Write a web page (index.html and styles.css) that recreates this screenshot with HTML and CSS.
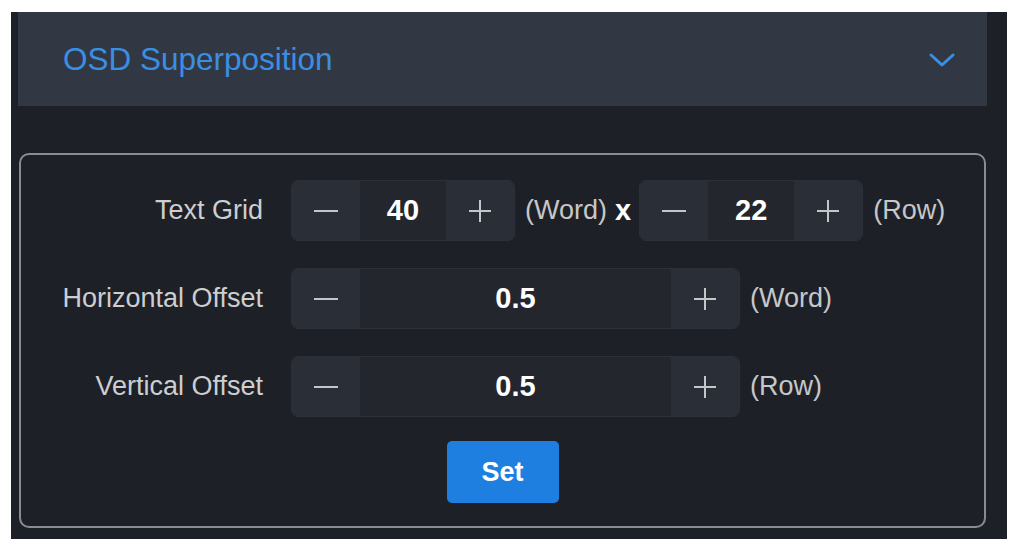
FILE: index.html
```html
<!DOCTYPE html>
<html lang="en">
<head>
    <meta charset="UTF-8">
    <meta name="viewport" content="width=device-width, initial-scale=1.0">
    <title>OSD Superposition</title>
    <link rel="stylesheet" href="styles.css">
</head>
<body>
    <div class="panel">

        <!-- collapse header -->
        <div class="header">
            <span class="title">OSD Superposition</span>
            <svg class="chevron" width="26" height="14" viewBox="0 0 26 14">
                <path d="M2 2 L13 12 L24 2" fill="none" stroke="#3a8ee6" stroke-width="3" stroke-linecap="round" stroke-linejoin="round"/>
            </svg>
        </div>

        <!-- form -->
        <div class="form">
            <div class="row">
                <label class="label">Text Grid</label>
                <div class="stepper">
                    <button class="step">
                        <svg width="24" height="4" viewBox="0 0 24 4"><path d="M0 2 H24" stroke="#c4c6ca" stroke-width="2"/></svg>
                    </button>
                    <span class="value">40</span>
                    <button class="step">
                        <svg width="22" height="22" viewBox="0 0 22 22"><path d="M0 11 H22 M11 0 V22" stroke="#c4c6ca" stroke-width="2"/></svg>
                    </button>
                </div>
                <span class="unit">(Word)</span>
                <span class="times">x</span>
                <div class="stepper">
                    <button class="step">
                        <svg width="24" height="4" viewBox="0 0 24 4"><path d="M0 2 H24" stroke="#c4c6ca" stroke-width="2"/></svg>
                    </button>
                    <span class="value">22</span>
                    <button class="step">
                        <svg width="22" height="22" viewBox="0 0 22 22"><path d="M0 11 H22 M11 0 V22" stroke="#c4c6ca" stroke-width="2"/></svg>
                    </button>
                </div>
                <span class="unit">(Row)</span>
            </div>

            <div class="row">
                <label class="label">Horizontal Offset</label>
                <div class="stepper wide">
                    <button class="step">
                        <svg width="24" height="4" viewBox="0 0 24 4"><path d="M0 2 H24" stroke="#c4c6ca" stroke-width="2"/></svg>
                    </button>
                    <span class="value">0.5</span>
                    <button class="step">
                        <svg width="22" height="22" viewBox="0 0 22 22"><path d="M0 11 H22 M11 0 V22" stroke="#c4c6ca" stroke-width="2"/></svg>
                    </button>
                </div>
                <span class="unit">(Word)</span>
            </div>

            <div class="row">
                <label class="label">Vertical Offset</label>
                <div class="stepper wide">
                    <button class="step">
                        <svg width="24" height="4" viewBox="0 0 24 4"><path d="M0 2 H24" stroke="#c4c6ca" stroke-width="2"/></svg>
                    </button>
                    <span class="value">0.5</span>
                    <button class="step">
                        <svg width="22" height="22" viewBox="0 0 22 22"><path d="M0 11 H22 M11 0 V22" stroke="#c4c6ca" stroke-width="2"/></svg>
                    </button>
                </div>
                <span class="unit">(Row)</span>
            </div>

            <div class="actions">
                <button class="set">Set</button>
            </div>
        </div>
    </div>
</body>
</html>
```

FILE: styles.css
```css
*{
    box-sizing: border-box;
    margin: 0;
    padding: 0;
}

body{
    background-color: #ffffff;
    font-family: "Liberation Sans", Arial, sans-serif;
}

.panel{
    width: 996px;
    height: 527px;
    margin: 12px 0 0 11px;
    background-color: #1e2027;
    display: flex;
    flex-direction: column;
}

.header{
    height: 94px;
    margin: 0 20px 0 7px;
    background-color: #323843;
    display: flex;
    align-items: center;
    justify-content: space-between;
    padding: 0 32px 0 45px;
}

.title{
    color: #3b8fe2;
    font-size: 31.5px;
}

.chevron{
    display: block;
    margin-top: 2px;
}

.form{
    margin: 47px 21px 0 8px;
    border: 2px solid #8a8c90;
    border-radius: 10px;
    padding: 25px 0 23px 0;
    display: flex;
    flex-direction: column;
    gap: 27px;
}

.row{
    display: flex;
    align-items: center;
    height: 61px;
}

.label{
    width: 242px;
    margin-right: 28px;
    text-align: right;
    color: #cdcecf;
    font-size: 27px;
}

.stepper{
    display: flex;
    width: 224px;
    height: 61px;
    border: 1px solid #2c3038;
    border-radius: 7px;
    overflow: hidden;
    background-color: #23262d;
}

.stepper.wide{
    width: 449px;
}

button{
    border: none; /* Removes the border */
    background: none; /* Removes the background */
    outline: none;
    font-family: inherit;
}

.step{
    width: 68px;
    flex-shrink: 0;
    background-color: #2a2e36;
    display: flex;
    align-items: center;
    justify-content: center;
}

.step svg{
    display: block;
}

.value{
    flex: 1;
    display: flex;
    align-items: center;
    justify-content: center;
    color: #ffffff;
    font-weight: bold;
    font-size: 29px;
}

.unit{
    margin-left: 10px;
    color: #c6c7c9;
    font-size: 27px;
}

.times{
    margin: 0 8px 0 8px;
    color: #ffffff;
    font-weight: bold;
    font-size: 29px;
}

.actions{
    display: flex;
    justify-content: center;
    margin-top: -3px;
}

.set{
    width: 112px;
    height: 62px;
    background-color: #1f7fe0;
    border-radius: 5px;
    color: #ffffff;
    font-size: 27px;
    font-weight: bold;
}
```
